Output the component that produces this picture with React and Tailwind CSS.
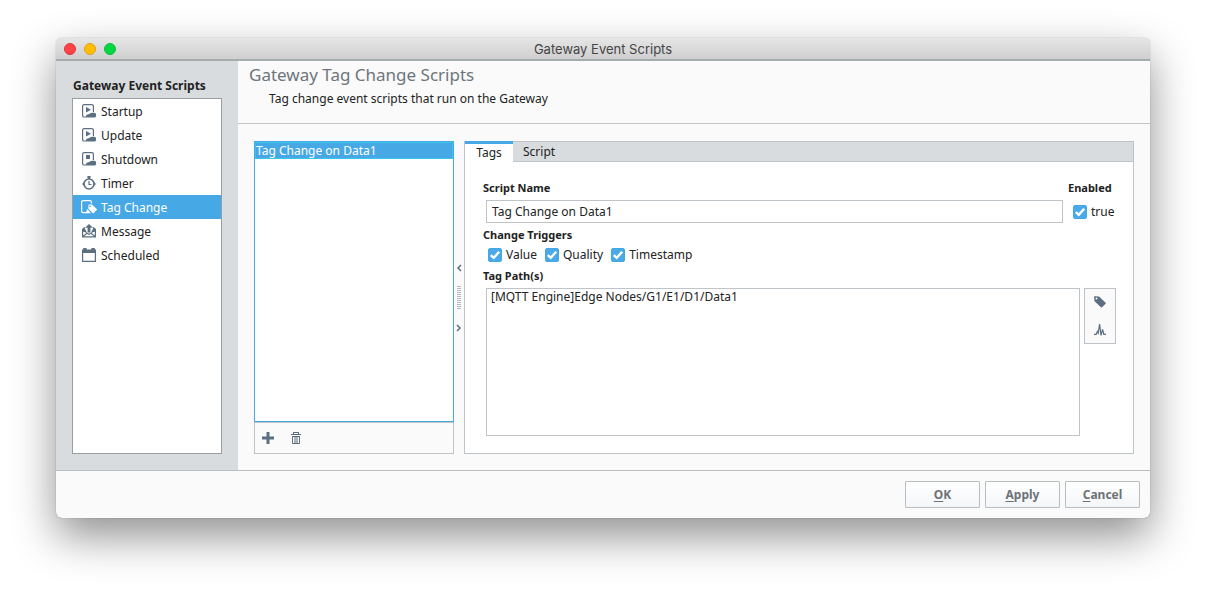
import React, { useState } from "react";

const slate = "#5b6f80";

function ScriptPage({ children }) {
  return (
    <>
      <path
        d="M11.4 8V2.2Q11.4.6 9.9.6H2.2Q.6.6.6 2.2V11.4Q.6 13 2.2 13H5"
        fill="none"
        stroke="currentColor"
        strokeWidth="1.2"
      />
      {children}
    </>
  );
}

function Cloud() {
  return (
    <path
      d="M5.4 13.6Q4 13.4 4 12Q4 10.7 5.6 10.6Q6.6 10.4 7.4 9.8Q9 8.6 11 8.8H12.6Q14 9 14 10.4V12Q14 13.5 12.4 13.6Z"
      fill="currentColor"
    />
  );
}

function NavIcon({ name }) {
  return (
    <svg viewBox="0 0 14 14" width="14" height="14" className="shrink-0 overflow-visible" aria-hidden="true">
      {name === "play" && (
        <ScriptPage>
          <path d="M4 3L9 5.7L4 8.4Z" fill="currentColor" />
          <Cloud />
        </ScriptPage>
      )}
      {name === "stop" && (
        <ScriptPage>
          <path d="M4 3H8V7H4Z" fill="currentColor" />
          <Cloud />
        </ScriptPage>
      )}
      {name === "timer" && (
        <g fill="none" stroke="currentColor">
          <circle cx="7" cy="8" r="5" strokeWidth="1.6" />
          <path d="M7 5V8.5H9.5" strokeWidth="1.2" />
          <path d="M7 0V3M5.4 1H8.6" strokeWidth="1.8" />
          <path d="M12 6.2L14 8L12 9.8Z" fill="currentColor" stroke="none" />
          <path d="M2 6.2L0 8L2 9.8Z" fill="currentColor" stroke="none" />
        </g>
      )}
      {name === "tag" && (
        <>
          <path
            d="M9.4 3.4V2.2Q9.4 .6 7.9 .6H1.4Q-.4 .6 -.4 2.2V11.2Q-.4 12.6 1.2 12.6H4"
            fill="none"
            stroke="currentColor"
            strokeWidth="1.2"
          />
          <path
            fillRule="evenodd"
            d="M6.6 4.4L10 4.6L15.2 9.4L11.2 13.4L6.2 8.6ZM8 5.6A.8.8 0 1 0 8 7.2A.8.8 0 1 0 8 5.6Z"
            fill="currentColor"
          />
          <path d="M5.4 9L3.4 13.2H9Z" fill="currentColor" />
        </>
      )}
      {name === "message" && (
        <>
          <path
            d="M3 3.4L.6 5.2V12.9H13.4V5.2L11 3.4M.8 12.6L5 9.2L7 10.4L9 9.2L13.2 12.6"
            fill="none"
            stroke="currentColor"
            strokeWidth="1.2"
          />
          <path d="M7 0L11 3.8H8.4V8.6H5.6V3.8H3Z" fill="currentColor" />
          <path d="M.6 5L2.6 4L5.2 9L.6 7.5ZM13.4 5L11.4 4L8.8 9L13.4 7.5Z" fill="currentColor" />
        </>
      )}
      {name === "calendar" && (
        <>
          <path d="M0 1.4H14V5H0Z" fill="currentColor" />
          <path d="M.6 4V13.4H13.4V4" fill="none" stroke="currentColor" strokeWidth="1.2" />
          <path d="M1.2 0H4.6V3H1.2ZM9.4 0H12.8V3H9.4Z" fill="currentColor" />
        </>
      )}
    </svg>
  );
}

const navItems = [
  { label: "Startup", icon: "play" },
  { label: "Update", icon: "play" },
  { label: "Shutdown", icon: "stop" },
  { label: "Timer", icon: "timer" },
  { label: "Tag Change", icon: "tag" },
  { label: "Message", icon: "message" },
  { label: "Scheduled", icon: "calendar" },
];

function Check({ label }) {
  return (
    <label className="flex items-center gap-1">
      <span className="grid size-3.5">
        <input
          type="checkbox"
          defaultChecked
          className="peer col-start-1 row-start-1 size-3.5 appearance-none rounded-xs border border-[#aeb6bc] bg-white checked:border-[#45a6e4] checked:bg-[#4aa9e7]"
        />
        <svg
          viewBox="0 0 14 14"
          className="pointer-events-none invisible col-start-1 row-start-1 size-3.5 peer-checked:visible"
          aria-hidden="true"
        >
          <path d="M2.8 7.2L5.7 9.8L11.2 3.8" fill="none" stroke="#fff" strokeWidth="2.4" />
        </svg>
      </span>
      {label}
    </label>
  );
}

function DialogButton({ label }) {
  return (
    <button
      type="button"
      className="h-[27px] w-[75px] rounded-[1px] border border-[#b9bdc0] bg-linear-to-b from-white to-[#f3f6f8] text-xs font-bold text-[#6d7378]"
    >
      <span className="underline underline-offset-2">{label[0]}</span>
      {label.slice(1)}
    </button>
  );
}

export default function App() {
  const [section, setSection] = useState("Tag Change");

  return (
    <div className="flex h-screen min-h-[480px] flex-col bg-white px-14 pt-[38px] pb-[74px] font-['Noto_Sans','Open_Sans',sans-serif] text-xs text-[#222]">
      <div className="flex min-h-0 flex-1 flex-col overflow-hidden rounded-md bg-[#fafafa] shadow-[0_0_1px_rgba(0,0,0,0.5),0_18px_44px_rgba(0,0,0,0.44)]">
        <header className="flex h-[23px] shrink-0 items-center border-b-2 border-[#a6abae] bg-linear-to-b from-[#e6e6e6] to-[#cfcfcf] px-2">
          <div className="flex flex-1 gap-2">
            <button type="button" aria-label="Close" className="size-3 rounded-full border border-[#e0343a] bg-[#ff4346]" />
            <button type="button" aria-label="Minimize" className="size-3 rounded-full border border-[#e0a11a] bg-[#ffbd05]" />
            <button type="button" aria-label="Zoom" className="size-3 rounded-full border border-[#0dbc3a] bg-[#00d742]" />
          </div>
          <h1 className="pt-0.5 font-[Inter,sans-serif] text-[13px] text-[#454545]">Gateway Event Scripts</h1>
          <div className="flex-1" />
        </header>

        <div className="flex min-h-0 flex-1 border-b border-[#babec1]">
          <aside className="flex w-[182px] shrink-0 flex-col bg-[#d8dcdf] px-4 pt-4 pb-4">
            <h2 className="h-[21px] pl-px text-xs leading-[18px] font-bold whitespace-nowrap">Gateway Event Scripts</h2>
            <nav className="min-h-0 flex-1 border border-[#9a9fa3] bg-white">
              {navItems.map((item) => (
                <button
                  key={item.label}
                  type="button"
                  aria-current={item.label === section ? "page" : undefined}
                  onClick={() => setSection(item.label)}
                  className="group flex h-6 w-full items-center gap-[5px] px-[9px] pt-0.5 text-left aria-[current=page]:bg-[#47a8e6] aria-[current=page]:text-white"
                >
                  <span className="pb-0.5 text-[#5b6f80] group-aria-[current=page]:text-white">
                    <NavIcon name={item.icon} />
                  </span>
                  {item.label}
                </button>
              ))}
            </nav>
          </aside>

          <main className="flex min-w-0 flex-1 flex-col">
            <div className="h-[63px] shrink-0 border-b border-[#c0c4c7] px-[11px] pt-[3px]">
              <h2 className="text-[17px] leading-[22px] text-[#6e757a]">Gateway Tag Change Scripts</h2>
              <p className="pt-[3px] pl-5 leading-5">Tag change event scripts that run on the Gateway</p>
            </div>

            <div className="flex min-h-0 flex-1 px-4 pt-[17px] pb-4">
              <section className="flex w-[200px] shrink-0 flex-col" aria-label="Scripts">
                <ul className="flex-1 border border-[#47a8e6] bg-white">
                  <li>
                    <button
                      type="button"
                      className="block h-[17px] w-full border border-[#3cc3ec] bg-[#47a8e6] text-left leading-[15px] text-white"
                    >
                      Tag Change on Data1
                    </button>
                  </li>
                </ul>
                <div className="flex h-8 items-center gap-4 border border-[#bfc4c8] px-[7px]">
                  <button type="button" aria-label="Add script">
                    <svg viewBox="0 0 12 12" className="size-3" aria-hidden="true">
                      <path d="M6 0V12M0 6H12" stroke={slate} strokeWidth="3" />
                    </svg>
                  </button>
                  <button type="button" aria-label="Delete script">
                    <svg viewBox="0 0 12 12" className="size-3" aria-hidden="true">
                      <path
                        d="M1 2.5H11M3.5 .5H8.5M3.5 0V2M8.5 0V2M2.5 4V11.5H9.5V4M2 4.5H10M5 4V11M7 4V11"
                        fill="none"
                        stroke={slate}
                      />
                    </svg>
                  </button>
                </div>
              </section>

              <div className="flex w-2.5 shrink-0 flex-col items-center justify-center gap-3.5" role="separator" aria-orientation="vertical">
                <button type="button" aria-label="Collapse left">
                  <svg viewBox="0 0 6 8" className="h-2 w-1.5" aria-hidden="true">
                    <path d="M5 1L2 4L5 7" fill="none" stroke={slate} strokeWidth="1.5" />
                  </svg>
                </button>
                <svg viewBox="0 0 4 24" className="h-6 w-1" aria-hidden="true">
                  <path d="M2 0V24" stroke="#b4b9bd" strokeWidth="4" strokeDasharray="1 1" />
                </svg>
                <button type="button" aria-label="Collapse right">
                  <svg viewBox="0 0 6 8" className="h-2 w-1.5" aria-hidden="true">
                    <path d="M1 1L4 4L1 7" fill="none" stroke={slate} strokeWidth="1.5" />
                  </svg>
                </button>
              </div>

              <section className="flex min-w-0 flex-1 flex-col border border-[#bfc4c8] bg-white">
                <div className="-mt-px flex h-[21px] shrink-0 bg-[#d8dcdf]" role="tablist">
                  <button
                    type="button"
                    role="tab"
                    aria-selected="true"
                    className="w-12 border-t-3 border-[#47a8e6] bg-white text-center leading-4"
                  >
                    Tags
                  </button>
                  <div className="flex flex-1 border-y border-[#bfc4c8]">
                    <button type="button" role="tab" aria-selected="false" className="px-2.5 leading-[18px]">
                      Script
                    </button>
                  </div>
                </div>

                <div className="flex min-h-0 flex-1 flex-col px-[18px] pt-[18px] pb-[17px]">
                  <div className="flex justify-between text-[11px] leading-4 font-bold">
                    <label htmlFor="script-name">Script Name</label>
                    <span className="w-[47px]">Enabled</span>
                  </div>
                  <div className="flex items-center gap-2.5 pt-1 pl-[3px]">
                    <input
                      id="script-name"
                      type="text"
                      defaultValue="Tag Change on Data1"
                      className="h-[23px] min-w-0 flex-1 border border-[#bfc4c8] bg-white px-[5px]"
                    />
                    <div className="w-[42px]">
                      <Check label="true" />
                    </div>
                  </div>

                  <fieldset>
                    <legend className="pt-1 text-[11px] leading-4 font-bold">Change Triggers</legend>
                    <div className="flex h-6 items-center gap-2 pl-[5px]">
                      <Check label="Value" />
                      <Check label="Quality" />
                      <Check label="Timestamp" />
                    </div>
                  </fieldset>

                  <label htmlFor="tag-paths" className="h-[21px] text-[11px] leading-[18px] font-bold">
                    Tag Path(s)
                  </label>
                  <div className="flex min-h-0 flex-1 items-start gap-1 pl-[3px]">
                    <textarea
                      id="tag-paths"
                      defaultValue="[MQTT Engine]Edge Nodes/G1/E1/D1/Data1"
                      className="h-full min-w-0 flex-1 resize-none border border-[#bfc4c8] bg-white px-1"
                    />
                    <div className="-mr-px flex h-14 w-8 flex-col items-center justify-between border border-[#bfc4c8] bg-[#fafafa] py-[7px]">
                      <button type="button" aria-label="Browse tags">
                        <svg viewBox="0 0 12 12" className="size-3" aria-hidden="true">
                          <path
                            fillRule="evenodd"
                            d="M0 1Q0 .3 .8 .3L5 .5L11.7 6.8Q12 7.3 11.6 7.8L8 11.3Q7.5 11.7 7 11.3L.5 5.2ZM2.5 1.6A1 1 0 1 0 2.5 3.6A1 1 0 1 0 2.5 1.6Z"
                            fill={slate}
                          />
                        </svg>
                      </button>
                      <button type="button" aria-label="Tag diagnostics">
                        <svg viewBox="0 0 12 12" className="size-3 overflow-visible" aria-hidden="true">
                          <path
                            d="M0 10.3H2.2L3.4 7.4L4.2 9L5.6 0L7 11.4L8.6 5.4L9.8 10.3H12"
                            fill="none"
                            stroke={slate}
                            strokeWidth="1.2"
                          />
                        </svg>
                      </button>
                    </div>
                  </div>
                </div>
              </section>
            </div>
          </main>
        </div>

        <footer className="flex h-[47px] shrink-0 items-start justify-end gap-[5px] px-2.5 pt-2.5">
          <DialogButton label="OK" />
          <DialogButton label="Apply" />
          <DialogButton label="Cancel" />
        </footer>
      </div>
    </div>
  );
}
